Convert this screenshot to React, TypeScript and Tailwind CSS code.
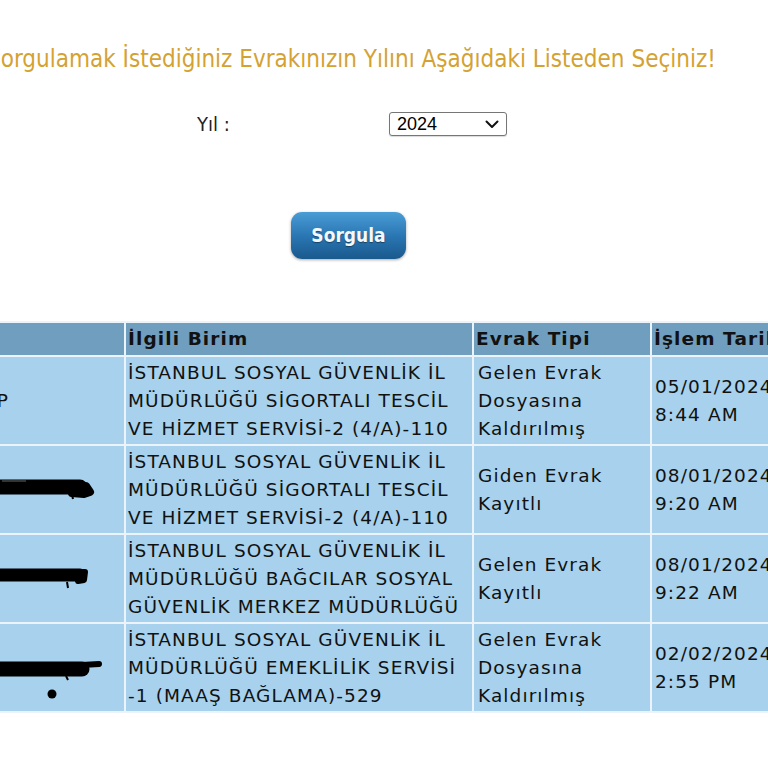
type Row = {
    mark: "none" | "a" | "b" | "c";
    birim: string[];
    tip: string[];
    tarih: string[];
};

const rows: Row[] = [
    {
        mark: "none",
        birim: ["İSTANBUL SOSYAL GÜVENLİK İL", "MÜDÜRLÜĞÜ SİGORTALI TESCİL", "VE HİZMET SERVİSİ-2 (4/A)-110"],
        tip: ["Gelen Evrak", "Dosyasına", "Kaldırılmış"],
        tarih: ["05/01/2024", "8:44 AM"],
    },
    {
        mark: "a",
        birim: ["İSTANBUL SOSYAL GÜVENLİK İL", "MÜDÜRLÜĞÜ SİGORTALI TESCİL", "VE HİZMET SERVİSİ-2 (4/A)-110"],
        tip: ["Giden Evrak", "Kayıtlı"],
        tarih: ["08/01/2024", "9:20 AM"],
    },
    {
        mark: "b",
        birim: ["İSTANBUL SOSYAL GÜVENLİK İL", "MÜDÜRLÜĞÜ BAĞCILAR SOSYAL", "GÜVENLİK MERKEZ MÜDÜRLÜĞÜ"],
        tip: ["Gelen Evrak", "Kayıtlı"],
        tarih: ["08/01/2024", "9:22 AM"],
    },
    {
        mark: "c",
        birim: ["İSTANBUL SOSYAL GÜVENLİK İL", "MÜDÜRLÜĞÜ EMEKLİLİK SERVİSİ", "-1 (MAAŞ BAĞLAMA)-529"],
        tip: ["Gelen Evrak", "Dosyasına", "Kaldırılmış"],
        tarih: ["02/02/2024", "2:55 PM"],
    },
];

// karalanmış isimler (ekranda görünen kısım)
function Scribble({ kind }: { kind: Row["mark"] }) {
    return (
        <svg width="124" height="86" viewBox="0 0 124 86" className="block ml-auto">
            {kind === "a" && (
                <>
                    <path d="M-6 40 L80 40" stroke="#000" strokeWidth="15" strokeLinecap="round" />
                    <path d="M78 39 L86 39 L90 45 L84 47 L72 46" stroke="#000" strokeWidth="8" fill="none" strokeLinecap="round" strokeLinejoin="round" />
                    <path d="M2 34 L26 34" stroke="#444" strokeWidth="1.5" />
                    <path d="M72 48 L73 52" stroke="#000" strokeWidth="2" />
                </>
            )}
            {kind === "b" && (
                <>
                    <path d="M-6 39 L80 39" stroke="#000" strokeWidth="13" strokeLinecap="round" />
                    <path d="M80 36 L85 36 L84 44 L78 45" stroke="#000" strokeWidth="6" fill="none" strokeLinecap="round" strokeLinejoin="round" />
                    <path d="M67 46 L68 52" stroke="#000" strokeWidth="2" />
                </>
            )}
            {kind === "c" && (
                <>
                    <path d="M-6 44 L82 44" stroke="#000" strokeWidth="15" strokeLinecap="round" />
                    <path d="M82 40 L99 39" stroke="#000" strokeWidth="6" strokeLinecap="round" />
                    <path d="M66 51 L68 55" stroke="#000" strokeWidth="2" />
                    <circle cx="52" cy="69" r="4.5" fill="#000" />
                </>
            )}
        </svg>
    );
}

const cell = "px-[2px] py-[1.5px] leading-[28px] align-middle";

export default function App() {
    return (
        <div className="w-[768px] h-[768px] overflow-hidden bg-white text-[#111]">
            <h1 className="ml-[-13px] pt-[42px] whitespace-nowrap text-[24px] leading-[34px] text-[#d4a233] font-['DejaVu_Sans_Condensed','DejaVu_Sans',sans-serif] [font-stretch:condensed]">
                Sorgulamak İstediğiniz Evrakınızın Yılını Aşağıdaki Listeden Seçiniz!
            </h1>

            <div className="mt-[36px] flex items-center h-[24px]">
                <span className="ml-[197px] w-[192px] text-[20px] text-[#222] font-['DejaVu_Sans_Condensed','DejaVu_Sans',sans-serif] [font-stretch:condensed]">
                    Yıl :
                </span>
                <div className="relative">
                    <select
                        defaultValue="2024"
                        className="appearance-none w-[118px] h-[24px] border border-[#767676] rounded-[3px] bg-white pl-[7px] text-[18px] leading-[22px] text-black font-['Liberation_Sans',Arial,sans-serif] shadow-[0_1px_1px_rgba(0,0,0,0.15)]"
                    >
                        <option>2023</option>
                        <option>2024</option>
                        <option>2025</option>
                    </select>
                    <svg
                        width="14"
                        height="9"
                        viewBox="0 0 14 9"
                        className="absolute right-[8px] top-[8px] pointer-events-none"
                    >
                        <path d="M1.5 1.5 L7 7 L12.5 1.5" stroke="#111" strokeWidth="2" fill="none" strokeLinecap="round" strokeLinejoin="round" />
                    </svg>
                </div>
            </div>

            <div className="mt-[76px] ml-[291px]">
                <button
                    type="button"
                    className="w-[115px] h-[47px] rounded-[11px] bg-gradient-to-b from-[#4a9dd5] via-[#2a77b4] to-[#1a598d] shadow-[0_1px_3px_rgba(0,0,0,0.35)] text-[#f4f8fb] text-[19px] font-bold font-['DejaVu_Sans_Condensed','DejaVu_Sans',sans-serif] [font-stretch:condensed] [text-shadow:0_1px_1px_rgba(0,0,0,0.4)]"
                >
                    Sorgula
                </button>
            </div>

            <table className="table-fixed w-[932px] mt-[62px] ml-[-78px] border-separate border-spacing-[2px] bg-[#eaf4fa] text-[18.5px] tracking-[1.1px] font-['DejaVu_Sans',Verdana,sans-serif] text-[#111] whitespace-nowrap">
                <thead>
                    <tr className="bg-[#6f9ebf] text-left">
                        <th className="w-[200px] h-[32px]"></th>
                        <th className="w-[346px] px-[2px] font-bold leading-[28px]">İlgili Birim</th>
                        <th className="w-[176px] px-[2px] font-bold leading-[28px]">Evrak Tipi</th>
                        <th className="w-[200px] px-[2px] font-bold leading-[28px]">İşlem Tarihi</th>
                    </tr>
                </thead>
                <tbody>
                    {rows.map((r, i) => (
                        <tr key={i} className="bg-[#a7d1ec]">
                            {r.mark === "none" ? (
                                <td className={`${cell} text-right pr-[116px] tracking-normal`}>ALP</td>
                            ) : (
                                <td className="p-0 align-middle">
                                    <Scribble kind={r.mark} />
                                </td>
                            )}
                            <td className={cell}>
                                {r.birim.map((l) => (
                                    <div key={l}>{l}</div>
                                ))}
                            </td>
                            <td className={`${cell} pl-[4px]`}>
                                {r.tip.map((l) => (
                                    <div key={l}>{l}</div>
                                ))}
                            </td>
                            <td className={`${cell} pl-[3px]`}>
                                {r.tarih.map((l) => (
                                    <div key={l}>{l}</div>
                                ))}
                            </td>
                        </tr>
                    ))}
                </tbody>
            </table>
        </div>
    );
}
